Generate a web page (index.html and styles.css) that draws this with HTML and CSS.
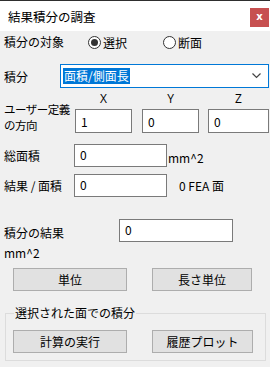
FILE: index.html
```
<!doctype html>
<html>
<head>
<meta charset="utf-8">
<title>結果積分の調査</title>
<link rel="stylesheet" href="styles.css">
</head>
<body>
<div class="titlebar">
	<span class="title">結果積分の調査</span>
	<span class="close">x</span>
</div>
<div class="main">
	<div class="row r-target">
		<span class="lbl w84">積分の対象</span>
		<span class="radio on"><i></i>選択</span>
		<span class="radio"><i></i>断面</span>
	</div>
	<div class="row r-kind">
		<span class="lbl w56">積分</span>
		<div class="combo">
			<span class="sel">面積/側面長</span>
			<svg width="9" height="6" viewBox="0 0 9 6"><polyline points="0.5,0.5 4.5,4.5 8.5,0.5" fill="none" stroke="#444" stroke-width="1.2"/></svg>
		</div>
	</div>
	<div class="dir">
		<div class="dirlbl"><span>ユーザー定義</span><span>の方向</span></div>
		<span class="axis">X</span>
		<span class="axis">Y</span>
		<span class="axis">Z</span>
		<div class="field fx">1</div>
		<div class="field fy">0</div>
		<div class="field fz">0</div>
	</div>
	<div class="row r-total">
		<span class="lbl w70">総面積</span>
		<div class="field w93">0</div>
		<span class="unit">mm^2</span>
	</div>
	<div class="row r-per">
		<span class="lbl w70">結果 / 面積</span>
		<div class="field w93">0</div>
		<span class="fea">0 FEA 面</span>
	</div>
	<div class="row r-result">
		<span class="lbl w115">積分の結果</span>
		<div class="field w114">0</div>
	</div>
	<div class="mm">mm^2</div>
	<div class="btns b-unit">
		<button class="btn w114">単位</button>
		<button class="btn w100">長さ単位</button>
	</div>
	<div class="group">
		<span class="legend">選択された面での積分</span>
		<div class="btns">
			<button class="btn w114">計算の実行</button>
			<button class="btn w101">履歴プロット</button>
		</div>
	</div>
</div>
</body>
</html>
```
FILE: styles.css
```
*{margin:0; padding:0; box-sizing:border-box;}
body{width:270px; height:367px; overflow:hidden; background:#f0f0f0; font-family:"Noto Sans CJK JP", sans-serif; font-size:12px; color:#000;}

.titlebar{height:31px; border-top:1px solid #2e2e2e; background:#fff; display:flex; align-items:center; justify-content:space-between; padding-left:8px;}
.title{font-size:12.5px; margin-top:1px;}
.close{width:19px; height:19px; margin-right:1px; margin-top:2px; background:#c75050; color:#fff; font-family:"DejaVu Sans", sans-serif; font-weight:bold; font-size:10px; line-height:18px; text-align:center;}

.main{padding-left:4px;}
.row{display:flex; align-items:center;}
.lbl{flex:none;}
.w56{width:56px;}
.w70{width:70px;}
.w84{width:84px;}
.w115{width:115px;}

.r-target{height:21px;}
.radio{display:flex; align-items:center; gap:2px; width:75px; margin-top:1px;}
.radio i{width:13px; height:13px; border:1px solid #333; border-radius:50%; background:#fff; display:flex; align-items:center; justify-content:center;}
.radio.on i:after{content:""; width:7px; height:7px; border-radius:50%; background:#333;}

.r-kind{height:24px; margin-top:12px;}
.combo{width:209px; height:24px; border:1px solid #0078d7; background:#fff; display:flex; align-items:center; justify-content:space-between; padding:0 7px 0 2px;}
.sel{background:#0078d7; color:#fff; line-height:16px; padding:0 1px;}

.dir{display:grid; grid-template-columns:71px 67px 66px 61px; grid-template-rows:17px 24px; margin-top:4px;}
.dirlbl{grid-row:1 / 3; grid-column:1; align-self:end; display:flex; flex-direction:column; white-space:nowrap; font-size:11.5px; letter-spacing:-0.5px;}
.dirlbl span{height:16px; line-height:16px;}
.axis{grid-row:1; text-align:center; line-height:14px; font-family:"Open Sans", sans-serif;}
.axis:nth-of-type(1){grid-column:2; width:57px;}
.axis:nth-of-type(2){grid-column:3; width:57px;}
.axis:nth-of-type(3){grid-column:4; width:61px;}
.field{height:23px; border:1px solid #7a7a7a; background:#fff; padding:1px 5px; line-height:18px;}
.dir .field{grid-row:2; height:24px; padding-top:3px;}
.fx{grid-column:2; width:57px;}
.fy{grid-column:3; width:57px;}
.fz{grid-column:4; width:61px;}

.w93{width:93px;}
.w114{width:114px;}
.w100{width:100px;}
.w101{width:101px;}
.r-total{height:23px; margin-top:11px;}
.unit{margin-left:1px; margin-top:3px;}
.r-per{height:23px; margin-top:7px;}
.fea{margin-left:12px;}
.r-result{height:23px; margin-top:22px;}
.r-result .lbl{margin-top:3px;}
.mm{line-height:16px; margin-top:3px;}

.btns{display:flex; gap:25px; padding-left:9px;}
.b-unit{margin-top:7px;}
.btn{height:23px; background:#e1e1e1; border:1px solid #adadad; font:inherit; color:#000;}

.group{position:relative; margin:22px 0 0 1px; width:261px; height:48px; border:1px solid #dcdcdc; padding-top:16px;}
.group .btns{padding-left:7px;}
.legend{position:absolute; left:8px; top:-9px; background:#f0f0f0; padding:0 1px; line-height:16px;}
```
